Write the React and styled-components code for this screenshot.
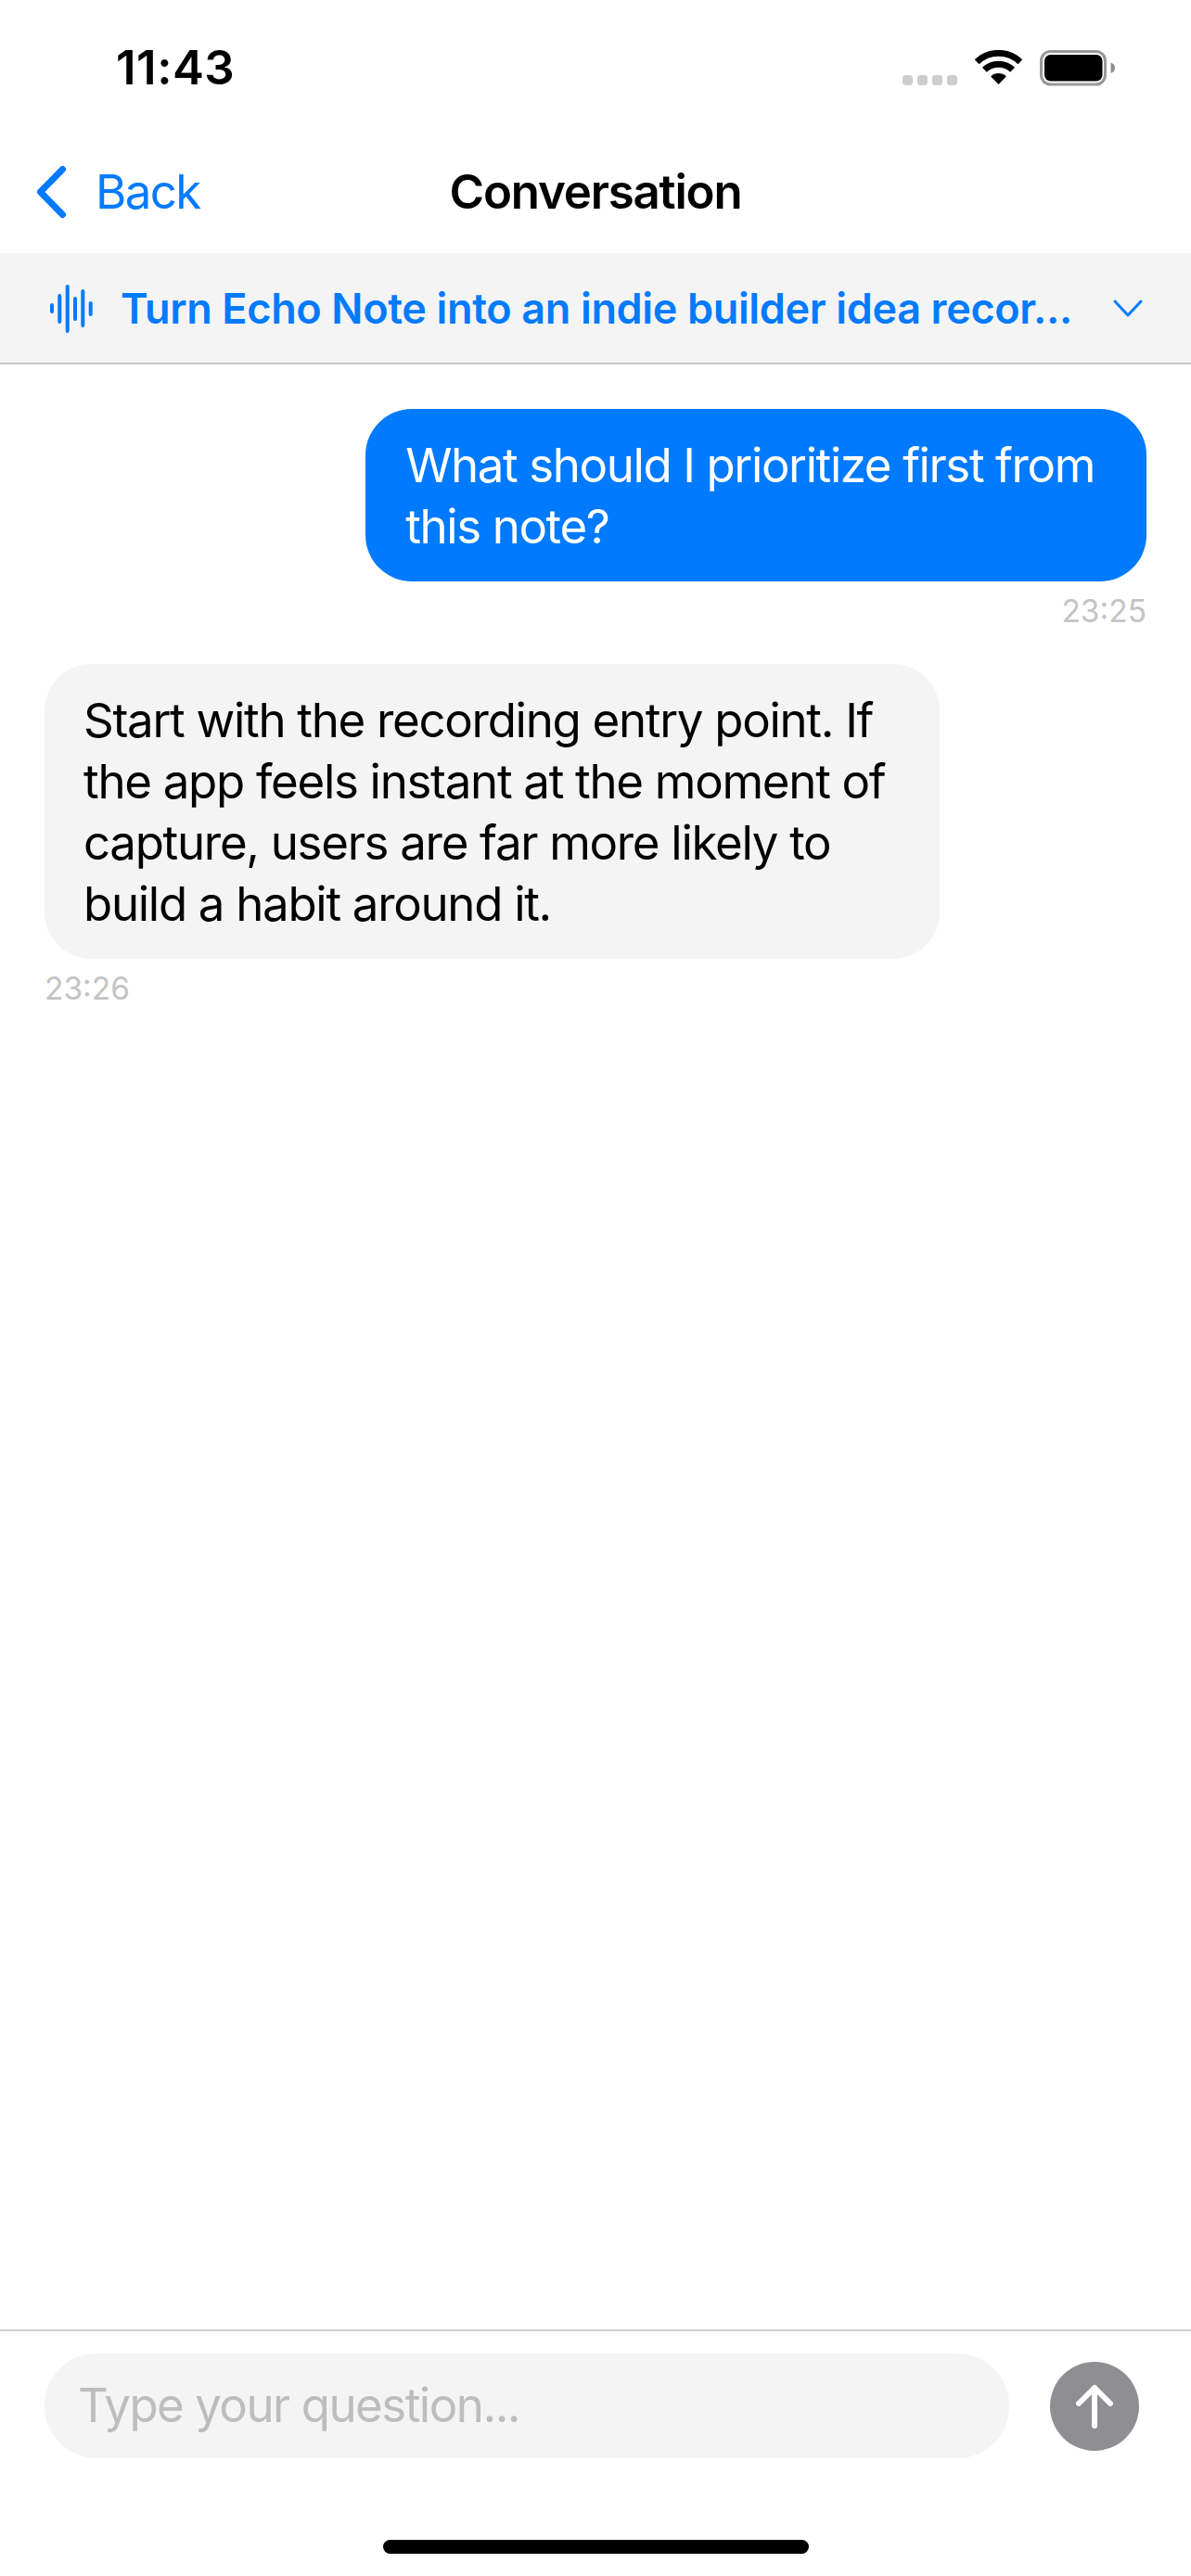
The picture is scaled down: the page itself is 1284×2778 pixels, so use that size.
import React from "react";
import styled, { createGlobalStyle } from "styled-components";

const Global = createGlobalStyle`
  html, body { margin: 0; padding: 0; background: #fff; }
  * { box-sizing: border-box; }
`;

const Screen = styled.div`
  width: 1284px;
  height: 2778px;
  display: flex;
  flex-direction: column;
  background: #fff;
  font-family: Inter, "Liberation Sans", sans-serif;
  overflow: hidden;
`;

const StatusBar = styled.div`
  height: 140px;
  flex: none;
  display: flex;
  justify-content: space-between;
  align-items: flex-start;
  padding: 48px 82px 0 125px;
`;

const Clock = styled.div`
  font-size: 51px;
  line-height: 50px;
  font-weight: 600;
  letter-spacing: 0.5px;
  color: #000;
`;

const StatusIcons = styled.div`
  display: flex;
  align-items: flex-start;
  gap: 19px;
  margin-top: 6px;
`;

const Dots = styled.div`
  display: flex;
  gap: 5px;
  margin-top: 27px;
`;

const Dot = styled.span`
  width: 11px;
  height: 11px;
  border-radius: 3.5px;
  background: #cdcdcd;
`;

const NavBar = styled.div`
  height: 133px;
  flex: none;
  display: grid;
  grid-template-columns: 1fr auto 1fr;
  align-items: center;
  padding: 0 38px;
`;

const BackLink = styled.div`
  display: flex;
  align-items: center;
  gap: 31px;
  color: #007aff;
  font-size: 51px;
  letter-spacing: -1.6px;
`;

const Title = styled.div`
  font-size: 51px;
  font-weight: 600;
  letter-spacing: -1.2px;
  color: #000;
`;

const Banner = styled.div`
  height: 120px;
  flex: none;
  display: flex;
  align-items: center;
  gap: 30px;
  padding: 2px 52px 0 54px;
  background: #f4f4f4;
  border-bottom: 2px solid #c8c8c8;
`;

const BannerTitle = styled.div`
  flex: 1;
  padding-bottom: 1px;
  color: #007aff;
  font-size: 45px;
  font-weight: 600;
  letter-spacing: -0.35px;
  white-space: nowrap;
`;

const Messages = styled.div`
  flex: 1;
  display: flex;
  flex-direction: column;
  padding: 48px 48px 0;
`;

const Group = styled.div`
  display: flex;
  flex-direction: column;
  align-items: ${(p) => (p.$mine ? "flex-end" : "flex-start")};
  margin-bottom: 37px;
`;

const Bubble = styled.div`
  padding: 28px ${(p) => (p.$mine ? "56px" : "59px")} 26px ${(p) => (p.$mine ? "43px" : "42px")};
  border-radius: 50px;
  font-size: 51px;
  line-height: 66px;
  letter-spacing: ${(p) => (p.$mine ? "-1.4px" : "-1.3px")};
  white-space: pre-line;
  background: ${(p) => (p.$mine ? "#007aff" : "#f4f4f4")};
  color: ${(p) => (p.$mine ? "#fff" : "#000")};
`;

const Stamp = styled.div`
  margin-top: 12px;
  font-size: 33.5px;
  line-height: 40px;
  color: #c4c4c4;
`;

const Composer = styled.div`
  flex: none;
  height: 227px;
  display: flex;
  align-items: flex-start;
  gap: 44px;
  padding: 24px 56px 0 48px;
  border-top: 2px solid #d0d0d0;
`;

const InputPill = styled.div`
  flex: 1;
  height: 113px;
  display: flex;
  align-items: center;
  padding: 0 36px 3px;
  border-radius: 56px;
  background: #f4f4f4;
  color: #bdbdbd;
  font-size: 51px;
  letter-spacing: -1.5px;
`;

const SendButton = styled.div`
  width: 96px;
  height: 96px;
  margin-top: 9px;
  border-radius: 50%;
  background: #8e8e93;
  display: flex;
  align-items: center;
  justify-content: center;
`;

const HomeArea = styled.div`
  flex: none;
  height: 39px;
  display: flex;
  justify-content: center;
`;

const HomeBar = styled.div`
  width: 459px;
  height: 15px;
  border-radius: 8px;
  background: #000;
`;

const Wifi = () => (
  <svg width="51" height="38" viewBox="0 0 51 38">
    <path d="M2.100 12.800A33.700 33.700 0 0 1 48.900 12.800M10.400 21.300A21.800 21.800 0 0 1 40.600 21.300" fill="none" stroke="#000" strokeWidth="7" />
    <path d="M25.500 37 17.200 28.400A12 12 0 0 1 33.800 28.400Z" fill="#000" />
  </svg>
);

const Battery = () => (
  <svg width="81" height="39" viewBox="0 0 81 39">
    <rect x="1.500" y="1.500" width="69" height="35.500" rx="10" fill="none" stroke="#999" strokeWidth="3" />
    <rect x="5" y="5" width="62.500" height="28.500" rx="6.500" fill="#000" />
    <path d="M76.500 13.500c2.800 1 4.500 3 4.500 5.800s-1.700 4.800-4.500 5.800z" fill="#8e8e8e" />
  </svg>
);

const BackChevron = () => (
  <svg width="34" height="58" viewBox="0 0 34 58">
    <path d="M29.500 4.500 5.500 29l24 24.500" fill="none" stroke="#007aff" strokeWidth="7" strokeLinecap="round" strokeLinejoin="round" />
  </svg>
);

const Waveform = () => (
  <svg width="46" height="54" viewBox="0 0 46 54" stroke="#007aff" strokeWidth="4" strokeLinecap="round">
    <path d="M2 23v7M10.300 13v28M18.700 3v48M27 16v22M35.300 8v37M43.700 21v12" />
  </svg>
);

const ChevronDown = () => (
  <svg width="32" height="20" viewBox="0 0 32 20">
    <path d="M2 2l14 15L30 2" fill="none" stroke="#007aff" strokeWidth="3" strokeLinecap="round" strokeLinejoin="round" />
  </svg>
);

const ArrowUp = () => (
  <svg width="40" height="48" viewBox="0 0 40 48">
    <path d="M20 45V4M3 21 20 4l17 17" fill="none" stroke="#fff" strokeWidth="6" strokeLinecap="round" strokeLinejoin="round" />
  </svg>
);

const messages = [
  { mine: true, text: "What should I prioritize first from\nthis note?", time: "23:25" },
  {
    mine: false,
    text: "Start with the recording entry point. If\nthe app feels instant at the moment of\ncapture, users are far more likely to\nbuild a habit around it.",
    time: "23:26",
  },
];

export default function App() {
  return (
    <Screen>
      <Global />
      <StatusBar>
        <Clock>11:43</Clock>
        <StatusIcons>
          <Dots>
            <Dot />
            <Dot />
            <Dot />
            <Dot />
          </Dots>
          <Wifi />
          <Battery />
        </StatusIcons>
      </StatusBar>
      <NavBar>
        <BackLink>
          <BackChevron />
          Back
        </BackLink>
        <Title>Conversation</Title>
      </NavBar>
      <Banner>
        <Waveform />
        <BannerTitle>Turn Echo Note into an indie builder idea recor...</BannerTitle>
        <ChevronDown />
      </Banner>
      <Messages>
        {messages.map((m) => (
          <Group key={m.time} $mine={m.mine}>
            <Bubble $mine={m.mine}>{m.text}</Bubble>
            <Stamp>{m.time}</Stamp>
          </Group>
        ))}
      </Messages>
      <Composer>
        <InputPill>Type your question...</InputPill>
        <SendButton>
          <ArrowUp />
        </SendButton>
      </Composer>
      <HomeArea>
        <HomeBar />
      </HomeArea>
    </Screen>
  );
}
